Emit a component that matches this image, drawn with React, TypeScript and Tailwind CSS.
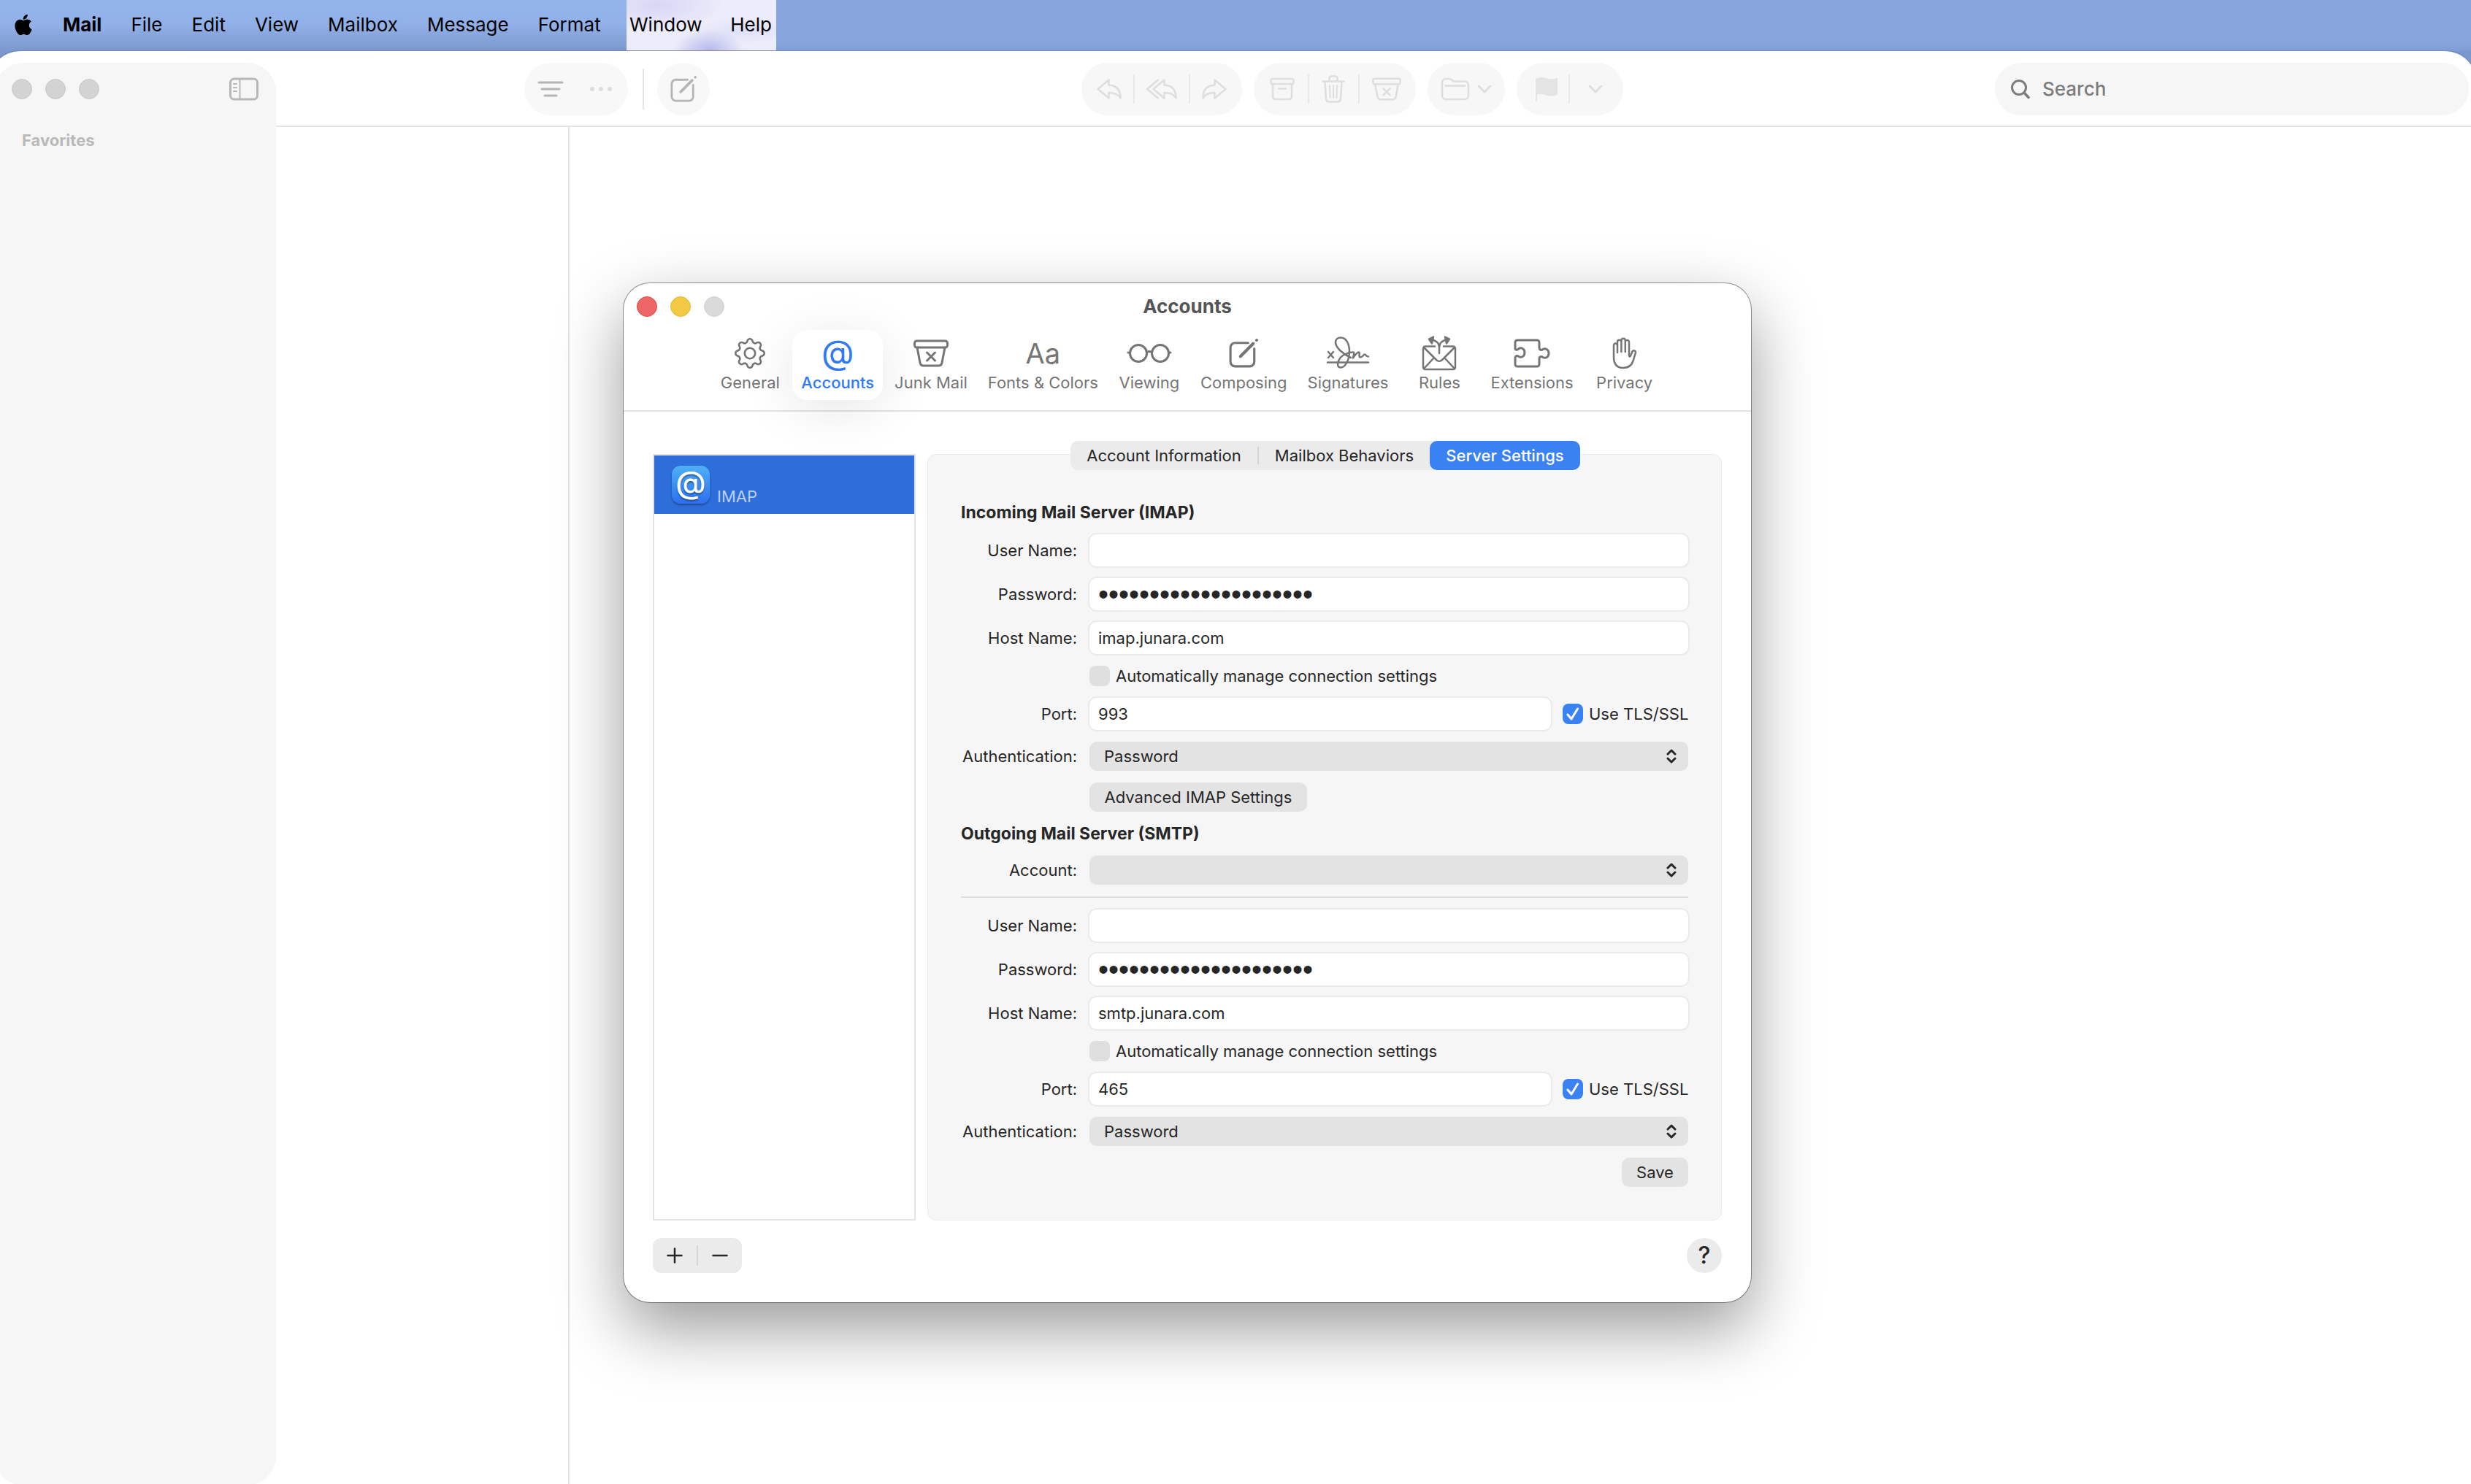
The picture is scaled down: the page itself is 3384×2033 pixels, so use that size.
import type { ReactNode } from "react";
import { BsApple, BsGear } from "react-icons/bs";

interface IconProps {
  className?: string;
}

interface DrawingProps extends IconProps {
  box: string;
  stroke?: number;
  children: ReactNode;
}

function Drawing({ box, stroke = 3, className, children }: DrawingProps) {
  return (
    <svg
      viewBox={box}
      className={className}
      fill="none"
      stroke="currentColor"
      strokeWidth={stroke}
      strokeLinecap="round"
      strokeLinejoin="round"
      aria-hidden="true"
    >
      {children}
    </svg>
  );
}

function SidebarIcon() {
  return (
    <Drawing box="0 0 40 32" className="h-8 w-10">
      <rect x="1.5" y="2" width="37" height="28" rx="5" />
      <path d="M14.5 2v28" strokeWidth="2" />
      <path d="M6 9h4M6 14h4M6 19h4" strokeWidth="2" />
    </Drawing>
  );
}

function ComposeIcon({ className }: IconProps) {
  return (
    <Drawing box="0 0 38 38" className={className}>
      <path d="M25 5.5H8A6 6 0 0 0 2 11.5V30a6 6 0 0 0 6 6h19a6 6 0 0 0 6-6V13" />
      <path d="M31.5 6.5 15 23" strokeWidth="4" />
      <path d="M36 2l.2-.2" strokeWidth="3.5" />
    </Drawing>
  );
}

const arrowPath = "M17.5 2.5 2.5 15l15 12.5V20c8 0 13 2 16 7.5 0-11-5-17.5-16-18z";

function ReplyIcon({ className }: IconProps) {
  return (
    <Drawing box="0 0 36 30" stroke={2.5} className={className}>
      <path d={arrowPath} />
    </Drawing>
  );
}

function ReplyAllIcon() {
  return (
    <Drawing box="0 0 44 30" stroke={2.5} className="h-[30px] w-11">
      <path d={arrowPath} transform="translate(8 0)" />
      <path d="M17 2.5 2 15l15 12.5" />
    </Drawing>
  );
}

function ArchiveIcon() {
  return (
    <Drawing box="0 0 34 32" stroke={2.5} className="h-8 w-[34px]">
      <rect x="1.5" y="2" width="31" height="7" rx="2.5" />
      <path d="M4 9v17a4 4 0 0 0 4 4h18a4 4 0 0 0 4-4V9M12 15.5h10" />
    </Drawing>
  );
}

function TrashIcon() {
  return (
    <Drawing box="0 0 32 38" stroke={2.5} className="h-[38px] w-8">
      <path d="M1.5 8.500h29M10.500 8V4.5a3 3 0 0 1 3-3h5a3 3 0 0 1 3 3V8" />
      <path d="m4.5 9 1.5 24a4 4 0 0 0 4 3.5h12a4 4 0 0 0 4-3.5L27.5 9" />
      <path d="m11 14 .5 17M16 14v17M21 14l-.5 17" strokeWidth="2" />
    </Drawing>
  );
}

function JunkIcon({ className }: IconProps) {
  return (
    <Drawing box="0 0 48 38" className={className}>
      <rect x="1.5" y="2" width="45" height="9" rx="3" />
      <path d="m5 11 4 21a5 5 0 0 0 5 4h20a5 5 0 0 0 5-4l4-21" />
      <path d="m18.5 18 11 11M29.5 18l-11 11" />
    </Drawing>
  );
}

function FolderIcon() {
  return (
    <Drawing box="0 0 40 32" stroke={2.5} className="h-8 w-10">
      <path d="M2 7a5 5 0 0 1 5-5h5c3 0 4 3.5 7 3.5h14a5 5 0 0 1 5 5V25a5 5 0 0 1-5 5H7a5 5 0 0 1-5-5z" />
      <path d="M6.5 11.5h27" />
    </Drawing>
  );
}

function ChevronIcon() {
  return (
    <Drawing box="0 0 20 12" className="h-3 w-5">
      <path d="m2 2 8 8 8-8" />
    </Drawing>
  );
}

function FlagIcon() {
  return (
    <Drawing box="0 0 32 34" stroke={2} className="h-[34px] w-8">
      <path
        d="M2 4c6-4 10-2 15-.5C21 5 25 5 30 3v21c-5 2-10 2-15 0-5-1.5-9-2-13 0z"
        fill="currentColor"
      />
      <path d="M2 3v30" />
    </Drawing>
  );
}

function SearchIcon() {
  return (
    <Drawing box="0 0 26 28" className="h-7 w-[26px]">
      <circle cx="11" cy="12" r="9.5" />
      <path d="m18 19 6 6.5" strokeWidth="3.5" />
    </Drawing>
  );
}

function GlassesIcon() {
  return (
    <Drawing box="0 0 62 28" className="h-7 w-[62px]">
      <circle cx="16" cy="14" r="11.5" />
      <circle cx="46" cy="14" r="11.5" />
      <path d="M27.5 13c2-2 5-2 7 0M4 13H2M58 13h2" />
    </Drawing>
  );
}

function SignatureIcon() {
  return (
    <Drawing box="0 0 60 46" stroke={2.5} className="h-[46px] w-[60px]">
      <path d="M2 35.5h56" />
      <path d="m3 21 7 8M10 21l-7 8" />
      <path d="M34 29C23 24 13 15 13 8c0-4 3-6.5 7-6.5 8 0 12 9 12 19 0 12-6 22-12 22-4 0-5-4-3-9 3-8 13-12 20-12 3 0 0 5 0 8 2-3 5-8 8-8 2 0-1 7 2 7s4-4 6-4 1 3 5 3" />
    </Drawing>
  );
}

function RulesIcon() {
  return (
    <Drawing box="0 0 48 48" stroke={2.5} className="size-12">
      <path d="M18 14.5H5a3 3 0 0 0-3 3V43a3 3 0 0 0 3 3h38a3 3 0 0 0 3-3V17.5a3 3 0 0 0-3-3H30" />
      <path d="m3 16 17 17c3 2.500 5 2.500 8 0l17-17M3 45l14-15M45 45 31 30" />
      <path d="M24 24V16C24 9 18 6 12 5M24 16c0-7 6-10 12-11" />
      <path d="m16 1.5-6 3 4 6zM32 1.5l6 3-4 6z" fill="currentColor" />
    </Drawing>
  );
}

function ExtensionsIcon() {
  return (
    <Drawing box="0 0 50 40" className="h-10 w-[50px]">
      <path d="M2 13V5a3 3 0 0 1 3-3h27a3 3 0 0 1 3 3v7c0 4 3 4 5 2.5 3-2 8 0 8 5.5s-5 7.5-8 5.5c-2-1.5-5-1.5-5 2.5v7a3 3 0 0 1-3 3H5a3 3 0 0 1-3-3v-8c0-4 3-4 5-2.5 3 2 8 0 8-5.5s-5-7.5-8-5.5C5 16 2 16 2 13z" />
    </Drawing>
  );
}

function HandIcon() {
  return (
    <Drawing box="0 0 34 44" stroke={2.5} className="h-11 w-[34px]">
      <path d="M2 27V11a2.5 2.5 0 0 1 5 0v10V6.5a2.7 2.7 0 0 1 5.4 0V20 4.5a2.7 2.7 0 0 1 5.4 0V20 6.5a2.6 2.6 0 0 1 5.2 0V25c0 2 1.3 2 2 .5l2.5-6a2.4 2.4 0 0 1 4.5 1.5l-3.5 11.5C26.5 38.5 22 42 15 42 6 42 2 36 2 27z" />
    </Drawing>
  );
}

const appMenus = ["File", "Edit", "View", "Mailbox", "Message", "Format"];

function MenuBar() {
  return (
    <nav className="flex h-[70px] text-[26px] leading-8 text-black">
      <div className="flex w-[858px] shrink-0 items-center bg-linear-to-b from-[#94b4ec] via-[#91b0e8] to-[#7a98cc] pb-0.5 pl-[18px]">
        <button aria-label="Apple menu">
          <BsApple className="h-[30px] w-7" />
        </button>
        <button className="ml-10 font-bold">Mail</button>
        {appMenus.map((menu) => (
          <button key={menu} className="ml-10">
            {menu}
          </button>
        ))}
      </div>
      <div className="flex w-[205px] shrink-0 items-center justify-between border-b border-[#9a9ab8] bg-[#ececfa] bg-[radial-gradient(ellipse_at_55%_100%,#b4b8ea_0%,transparent_30%),radial-gradient(ellipse_at_20%_10%,#d9d6f5_0%,transparent_40%),radial-gradient(ellipse_at_80%_60%,#dcdff8_0%,transparent_30%)] pr-1.5 pb-px pl-1">
        <button>Window</button>
        <button>Help</button>
      </div>
      <div className="flex-1 bg-linear-to-b from-[#88a6dd] from-80% to-[#7f9dd5]" />
    </nav>
  );
}

function Divider() {
  return <span className="h-10 w-0.5 bg-[#e9e9e9]" />;
}

function MailToolbar() {
  return (
    <div className="flex h-[103px] items-center border-b-2 border-[#e5e5e5] pl-[340px] text-[#dedede]">
      <div className="flex h-[72px] w-[142px] items-center gap-9 rounded-full bg-[#f8f8f8] pl-[18px]">
        <button aria-label="Filter" className="text-[#b5b5b5]">
          <Drawing box="0 0 36 22" className="h-[22px] w-9">
            <path d="M2 2h32M6 11h24M10 20h16" />
          </Drawing>
        </button>
        <button aria-label="More" className="flex gap-1.5">
          <span className="size-1.5 rounded-full bg-[#dcdcdc]" />
          <span className="size-1.5 rounded-full bg-[#dcdcdc]" />
          <span className="size-1.5 rounded-full bg-[#dcdcdc]" />
        </button>
      </div>
      <span className="ml-5 h-14 w-0.5 bg-[#e5e5e5]" />
      <button
        aria-label="New message"
        className="ml-[18px] flex size-[72px] items-center justify-center rounded-full bg-[#f8f8f8] text-[#b5b5b5]"
      >
        <ComposeIcon className="size-9" />
      </button>

      <div className="ml-[509px] flex gap-4">
        <div className="flex h-[72px] w-[220px] items-center justify-between rounded-full bg-[#f7f7f7] px-5">
          <button aria-label="Reply">
            <ReplyIcon className="h-[30px] w-9" />
          </button>
          <Divider />
          <button aria-label="Reply all">
            <ReplyAllIcon />
          </button>
          <Divider />
          <button aria-label="Forward">
            <ReplyIcon className="h-[30px] w-9 -scale-x-100" />
          </button>
        </div>
        <div className="flex h-[72px] w-[222px] items-center justify-between rounded-full bg-[#f7f7f7] pr-5 pl-[22px]">
          <button aria-label="Archive">
            <ArchiveIcon />
          </button>
          <Divider />
          <button aria-label="Delete">
            <TrashIcon />
          </button>
          <Divider />
          <button aria-label="Junk">
            <JunkIcon className="h-8 w-10" />
          </button>
        </div>
        <button
          aria-label="Move to"
          className="flex h-[72px] w-[106px] items-center justify-between rounded-full bg-[#f7f7f7] px-[18px]"
        >
          <FolderIcon />
          <ChevronIcon />
        </button>
        <div className="flex h-[72px] w-[146px] items-center justify-between rounded-full bg-[#f7f7f7] pr-7 pl-[25px]">
          <button aria-label="Flag" className="text-[#e4e4e4]">
            <FlagIcon />
          </button>
          <span className="mr-3 h-10 w-0.5 bg-[#e9e9e9]" />
          <button aria-label="Flag colour">
            <ChevronIcon />
          </button>
        </div>
      </div>

      <label className="mr-[11px] ml-auto flex h-[72px] w-[649px] items-center gap-[17px] rounded-full bg-[#f6f6f6] pl-[22px] text-[#7c7c7c]">
        <SearchIcon />
        <input
          type="search"
          placeholder="Search"
          className="min-w-0 flex-1 bg-transparent text-[26px] leading-8 font-medium outline-none placeholder:text-[#7c7c7c]"
        />
      </label>
    </div>
  );
}

function MailWindow() {
  return (
    <main className="-mr-2 -mb-0.5 -ml-4 flex flex-1 rounded-t-[44px] border-t border-white bg-white pl-2 shadow-[0_0_2px_#00000066]">
      <aside className="mt-[15px] w-[386px] shrink-0 rounded-[40px] bg-[#f6f6f6]">
        <div className="flex h-[72px] items-center gap-[18px] px-6">
          <span className="size-7 rounded-full border border-[#c8c8c8] bg-[#d3d3d3]" />
          <span className="size-7 rounded-full border border-[#c8c8c8] bg-[#d3d3d3]" />
          <span className="size-7 rounded-full border border-[#c8c8c8] bg-[#d3d3d3]" />
          <button aria-label="Toggle sidebar" className="ml-auto text-[#b7b7b7]">
            <SidebarIcon />
          </button>
        </div>
        <h2 className="mt-[18px] pl-[38px] text-[22px] leading-8 font-bold text-[#b9b9b9]">
          Favorites
        </h2>
      </aside>
      <div className="flex flex-1 flex-col">
        <MailToolbar />
        <div className="flex flex-1">
          <section className="w-[402px] border-r-2 border-[#e5e5e5]" />
          <section className="flex-1" />
        </div>
      </div>
    </main>
  );
}

const tabs = [
  { label: "General", icon: <BsGear className="size-[42px]" /> },
  { label: "Accounts", icon: <span className="pb-1 text-[46px] leading-[42px]">@</span> },
  { label: "Junk Mail", icon: <JunkIcon className="h-[38px] w-12" /> },
  { label: "Fonts & Colors", icon: <span className="text-[38px] leading-[42px]">Aa</span> },
  { label: "Viewing", icon: <GlassesIcon /> },
  { label: "Composing", icon: <ComposeIcon className="size-10" /> },
  { label: "Signatures", icon: <SignatureIcon /> },
  { label: "Rules", icon: <RulesIcon /> },
  { label: "Extensions", icon: <ExtensionsIcon /> },
  { label: "Privacy", icon: <HandIcon /> },
];

function TitleBar() {
  return (
    <header className="rounded-t-[36px] border-b-2 border-[#e3e3e3]">
      <div className="grid h-16 grid-cols-3 items-center px-[18px]">
        <div className="flex gap-[18px]">
          <button aria-label="Close" className="size-7 rounded-full border border-[#e2453f] bg-[#ec6765]" />
          <button aria-label="Minimize" className="size-7 rounded-full border border-[#e3b93a] bg-[#f3c944]" />
          <button aria-label="Zoom" className="size-7 rounded-full border border-[#d0d0d0] bg-[#dadada]" />
        </div>
        <h1 className="text-center text-[26px] leading-8 font-bold text-[#555]">Accounts</h1>
      </div>
      <div className="flex justify-center gap-1 pb-3.5">
        {tabs.map(({ label, icon }) => (
          <button
            key={label}
            className={
              label === "Accounts"
                ? "flex h-24 min-w-[108px] flex-col items-center rounded-[20px] bg-white px-3 pt-2 font-medium text-[#2f7af2] shadow-[0_12px_70px_#0000001a]"
                : "flex h-24 min-w-[108px] flex-col items-center rounded-[20px] px-3 pt-2 text-[#757575]"
            }
          >
            <span className="flex h-12 items-center font-normal">{icon}</span>
            <span className="text-[22px] leading-8 whitespace-nowrap">{label}</span>
          </button>
        ))}
      </div>
    </header>
  );
}

interface FieldProps {
  id: string;
  label: string;
  value?: string;
}

function Row({ id, label, children }: { id?: string; label?: string; children: ReactNode }) {
  return (
    <div className="flex items-center gap-[15px]">
      <label htmlFor={id} className="w-[159px] shrink-0 text-right whitespace-nowrap">
        {label}
      </label>
      <div className="flex flex-1 items-center">{children}</div>
    </div>
  );
}

const inputClass =
  "h-12 min-w-0 flex-1 rounded-xl border-2 border-[#ebebeb] bg-white px-3 outline-none";

function TextRow({ id, label, value = "" }: FieldProps) {
  return (
    <Row id={id} label={label}>
      <input id={id} type="text" defaultValue={value} className={inputClass} />
    </Row>
  );
}

function PasswordRow({ id }: { id: string }) {
  return (
    <Row id={id} label="Password:">
      <input
        id={id}
        type="password"
        defaultValue="correct-horse-battery"
        className="h-12 min-w-0 flex-1 rounded-xl border-2 border-[#ebebeb] bg-white px-3 font-['Liberation_Sans',sans-serif] text-[40px] leading-10 outline-none"
      />
    </Row>
  );
}

function SelectRow({ id, label, value = "" }: FieldProps) {
  return (
    <Row id={id} label={label}>
      <div className="grid flex-1 items-center p-0.5">
        <select
          id={id}
          className="col-start-1 row-start-1 h-10 appearance-none rounded-[10px] bg-[#e3e3e3] px-5 outline-none"
        >
          <option>{value}</option>
        </select>
        <Drawing
          box="0 0 14 20"
          className="pointer-events-none col-start-1 row-start-1 mr-4 h-5 w-3.5 justify-self-end"
        >
          <path d="m2 7 5-5 5 5M2 13l5 5 5-5" />
        </Drawing>
      </div>
    </Row>
  );
}

function Checkbox({ label, checked = false }: { label: string; checked?: boolean }) {
  return (
    <label className="flex items-center gap-2 px-0.5 whitespace-nowrap">
      <span className="grid size-7 place-items-center">
        <input
          type="checkbox"
          defaultChecked={checked}
          className="col-start-1 row-start-1 size-7 appearance-none rounded-lg bg-[#dfdfdf] checked:bg-[#3a82f2]"
        />
        {checked && (
          <Drawing
            box="0 0 18 18"
            className="pointer-events-none col-start-1 row-start-1 size-[18px] text-white"
          >
            <path d="m2 10 5 6L15.5 2" />
          </Drawing>
        )}
      </span>
      {label}
    </label>
  );
}

interface ServerFieldsProps {
  prefix: string;
  host: string;
  port: string;
}

/** Login, host and port rows shared by the incoming and outgoing servers. */
function ServerFields({ prefix, host, port }: ServerFieldsProps) {
  return (
    <>
      <TextRow id={`${prefix}-user`} label="User Name:" />
      <PasswordRow id={`${prefix}-password`} />
      <TextRow id={`${prefix}-host`} label="Host Name:" value={host} />
      <Row>
        <Checkbox label="Automatically manage connection settings" />
      </Row>
      <Row id={`${prefix}-port`} label="Port:">
        <input id={`${prefix}-port`} type="text" defaultValue={port} className={inputClass} />
        <span className="ml-3 flex w-[176px] shrink-0">
          <Checkbox label="Use TLS/SSL" checked />
        </span>
      </Row>
      <SelectRow id={`${prefix}-auth`} label="Authentication:" value="Password" />
    </>
  );
}

function ServerSettings() {
  return (
    <section className="flex flex-1 flex-col rounded-[12px] border border-[#ebebeb] bg-[#f6f6f6] pb-[43px]">
      <div className="-mt-[19px] ml-0.5 flex h-10 items-center self-center rounded-[10px] bg-[#ebebeb]">
        <button className="w-64">Account Information</button>
        <span className="h-6 w-0.5 bg-[#d5d5d5]" />
        <button className="w-[234px]">Mailbox Behaviors</button>
        <button className="h-10 w-[206px] rounded-[10px] bg-[#3a82f2] font-medium text-white">
          Server Settings
        </button>
      </div>
      <form className="mt-[42px] flex flex-col gap-3 pr-[43px] pl-[45px]">
        <h2 className="text-[23px] leading-8 font-bold">Incoming Mail Server (IMAP)</h2>
        <ServerFields prefix="imap" host="imap.junara.com" port="993" />
        <Row>
          <button type="button" className="m-0.5 h-10 w-[298px] rounded-[10px] bg-[#e3e3e3]">
            Advanced IMAP Settings
          </button>
        </Row>
        <h2 className="text-[23px] leading-8 font-bold">Outgoing Mail Server (SMTP)</h2>
        <SelectRow id="smtp-account" label="Account:" />
        <hr className="my-0.5 mr-0.5 border-t-2 border-[#dedede]" />
        <ServerFields prefix="smtp" host="smtp.junara.com" port="465" />
        <button type="button" className="m-0.5 h-10 w-[91px] self-end rounded-[10px] bg-[#e3e3e3]">
          Save
        </button>
      </form>
    </section>
  );
}

function AccountsDialog() {
  return (
    <div
      role="dialog"
      aria-label="Accounts"
      className="absolute top-[388px] left-[854px] w-[1544px] rounded-[36px] bg-white text-[22px] leading-8 text-[#262626] shadow-[0_0_0_1px_#00000066,0_36px_90px_#00000066]"
    >
      <TitleBar />
      <div className="px-10 pt-[58px] pb-10">
        <div className="flex gap-4">
          <ul className="w-[360px] border-2 border-[#e3e3e3] bg-white">
            <li className="flex h-20 gap-2.5 bg-[#2e6edb] px-6 py-3.5">
              <span className="flex size-[52px] items-center justify-center rounded-[12px] bg-linear-to-b from-[#50aff5] to-[#2f6ff0] pb-1.5 text-[42px] font-medium text-white shadow-[0_2px_3px_#00000055] text-shadow-[0_2px_2px_#00000066]">
                @
              </span>
              <span className="mt-[26px] text-[#bcd0f3]">IMAP</span>
            </li>
          </ul>
          <ServerSettings />
        </div>
        <footer className="mt-6 flex items-center justify-between">
          <div className="flex h-12 w-[122px] items-center rounded-[12px] bg-[#ebebeb]">
            <button aria-label="Add account" className="flex flex-1 justify-center">
              <Drawing box="0 0 22 22" stroke={2.5} className="size-[22px]">
                <path d="M11 1.5v19M1.5 11h19" />
              </Drawing>
            </button>
            <span className="h-7 w-0.5 bg-[#d5d5d5]" />
            <button aria-label="Remove account" className="flex flex-1 justify-center">
              <Drawing box="0 0 22 22" stroke={2.5} className="size-[22px]">
                <path d="M1.5 11h19" />
              </Drawing>
            </button>
          </div>
          <button className="size-12 rounded-full bg-[#ebebeb] text-[32px] font-medium">?</button>
        </footer>
      </div>
    </div>
  );
}

export default function App() {
  return (
    <div className="relative flex min-h-screen flex-col overflow-hidden bg-[#7b98ce] font-[Inter,sans-serif]">
      <MenuBar />
      <MailWindow />
      <AccountsDialog />
    </div>
  );
}
